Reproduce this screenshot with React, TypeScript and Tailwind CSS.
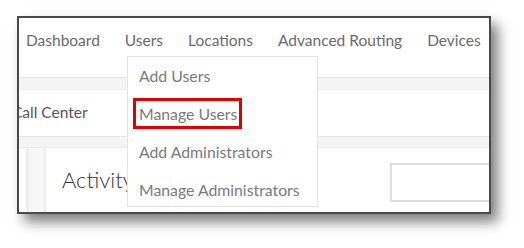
import React from "react";

export default function App() {
  const nav = ["Dashboard", "Users", "Locations", "Advanced Routing", "Devices"];
  const items = ["Add Users", "Manage Users", "Add Administrators", "Manage Administrators"];
  return (
    <div
      className="w-[524px] h-[248px] bg-white pl-[17px] pt-[16px]"
      style={{ fontFamily: "Lato, 'Open Sans', sans-serif" }}
    >
      <div className="relative w-[474px] h-[198px] border-2 border-[#4a4a4a] bg-white shadow-[7px_8px_12px_rgba(0,0,0,0.5)] overflow-hidden flex flex-col">
        <div className="h-[59px] shrink-0 flex gap-[25px] pl-[7px] pt-[13px] text-[15.5px] leading-[18px] text-[#6a6a6a] whitespace-nowrap">
          {nav.map((n) => (
            <span key={n}>{n}</span>
          ))}
        </div>
        <div className="h-[13px] shrink-0 bg-[#f4f4f4] border-t border-[#e6e6e6] border-b border-b-[#ececec]" />
        <div className="h-[46px] shrink-0 flex items-center">
          <span className="ml-[-7px] text-[15.5px] text-[#555] whitespace-nowrap">Call Center</span>
        </div>
        <div className="h-[12px] shrink-0 bg-[#f4f4f4] border-t border-[#e6e6e6] border-b border-b-[#ececec]" />
        <div className="flex-1 flex">
          <div className="w-[7px] shrink-0" />
          <div className="w-[20px] shrink-0 bg-[#f7f7f7] border-l-[3px] border-l-[#eeeeee] border-r-2 border-r-[#ececec]" />
          <div className="flex-1 relative">
            <div className="pl-[16px] pt-[18px] text-[22px] leading-[28px] font-light text-[#333] whitespace-nowrap">
              Activity
            </div>
            <div className="absolute left-[344px] top-[15px] w-[120px] h-[39px] border-2 border-[#dddddd] bg-white" />
          </div>
        </div>

        <div className="absolute left-[108px] top-[38px] w-[191px] h-[151px] bg-white border border-[#e3e3e3] pt-[0px]">
          {items.map((it) => (
            <div key={it} className="h-[38px] flex items-center pl-[11px] text-[15.8px] text-[#7a7a7a] whitespace-nowrap">
              {it}
            </div>
          ))}
          <div className="absolute left-[5px] top-[41px] w-[109px] h-[31px] border-[3px] border-[#e00000]" />
        </div>
      </div>
    </div>
  );
}
